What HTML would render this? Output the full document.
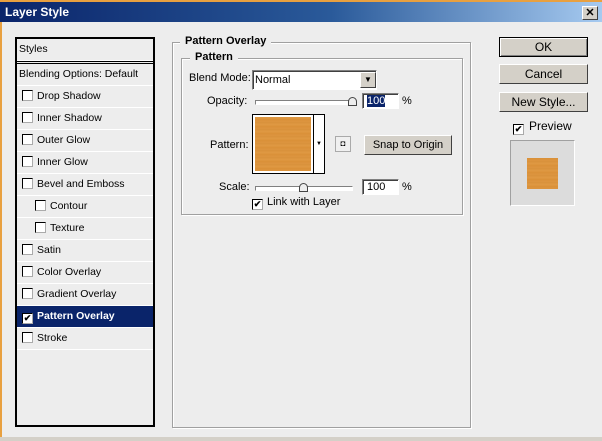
<!DOCTYPE html>
<html><head><style>
*{margin:0;padding:0;box-sizing:border-box}
body{width:602px;height:441px;background:#ededed;font-family:"Liberation Sans",sans-serif;font-size:11px;color:#000;position:relative;overflow:hidden}
.a{position:absolute}
.title{left:0;top:0;width:602px;height:22px;background:linear-gradient(90deg,#0a246a 0%,#2a5a9a 55%,#a6caf0 100%);border-top:2px solid #e8a040}
.title span{position:absolute;left:5px;top:3px;color:#fff;font-weight:bold;font-size:12px}
.x{right:4px;top:4px;width:16px;height:14px;background:#d4d0c8;border:1px solid;border-color:#fff #404040 #404040 #fff;font-size:11px;font-weight:bold;text-align:center;line-height:12px}
.lp{left:15px;top:37px;width:140px;height:390px;border:2px solid #000;background:#ededed;font-size:10.5px}
.row{position:absolute;left:0;width:136px;height:22px;border-bottom:1px solid #fff;line-height:21px;padding-left:2px}
.cb{display:inline-block;width:11px;height:11px;border:1px solid #000;border-right-color:#aaa;border-bottom-color:#aaa;background:#fff;vertical-align:-2px;margin-right:4px;margin-left:3px;font-size:9px;line-height:9px;text-align:center;font-weight:bold}
.sel{background:#0a246a;color:#fff;font-weight:bold}
.gb{border:1px solid #a0a0a0;box-shadow:1px 1px 0 #fff inset,1px 1px 0 #fff}
.lg{background:#ededed;font-weight:bold;padding:0 5px}
.btn{position:absolute;background:#d4d0c8;border:1px solid;border-color:#fff #404040 #404040 #fff;text-align:center;font-size:12px}
.in{background:#fff;border:1px solid;border-color:#808080 #fff #fff #808080;box-shadow:1px 1px 0 #404040 inset}
.sl{height:5px;border:1px solid;border-color:#808080 #fff #fff #808080;background:#fff}
.wood{background:repeating-linear-gradient(0deg,#dc9540 0,#d99038 3px,#e09a44 4px,#d8913a 7px)}
</style></head><body>
<div class="a" style="left:0;top:0;width:2px;height:441px;background:#e8a040"></div>
<div class="a title"><span>Layer Style</span><div class="a x">✕</div></div>

<div class="a lp">
<div class="row" style="top:0">Styles</div>
<div class="a" style="top:22px;left:0;width:136px;height:3px;border-top:1px solid #000;border-bottom:1px solid #000"></div>
<div class="row" style="top:25px">Blending Options: Default</div>
<div class="row" style="top:47px"><span class="cb"></span>Drop Shadow</div>
<div class="row" style="top:69px"><span class="cb"></span>Inner Shadow</div>
<div class="row" style="top:91px"><span class="cb"></span>Outer Glow</div>
<div class="row" style="top:113px"><span class="cb"></span>Inner Glow</div>
<div class="row" style="top:135px"><span class="cb"></span>Bevel and Emboss</div>
<div class="row" style="top:157px;padding-left:15px"><span class="cb"></span>Contour</div>
<div class="row" style="top:179px;padding-left:15px"><span class="cb"></span>Texture</div>
<div class="row" style="top:201px"><span class="cb"></span>Satin</div>
<div class="row" style="top:223px"><span class="cb"></span>Color Overlay</div>
<div class="row" style="top:245px"><span class="cb"></span>Gradient Overlay</div>
<div class="row sel" style="top:267px"><span class="cb" style="color:#000">✔</span>Pattern Overlay</div>
<div class="row" style="top:289px"><span class="cb"></span>Stroke</div>
</div>

<div class="a gb" style="left:172px;top:42px;width:299px;height:386px"></div>
<div class="a lg" style="left:180px;top:35px;font-size:11px">Pattern Overlay</div>
<div class="a gb" style="left:181px;top:58px;width:282px;height:157px"></div>
<div class="a lg" style="left:190px;top:51px">Pattern</div>

<div class="a" style="left:189px;top:72px">Blend Mode:</div>
<div class="a in" style="left:252px;top:70px;width:125px;height:20px;padding:3px 2px;font-size:11px">Normal</div>
<div class="a btn" style="left:360px;top:72px;width:16px;height:16px;font-size:8px;line-height:14px">▼</div>

<div class="a" style="left:207px;top:95px">Opacity:</div>
<div class="a sl" style="left:255px;top:100px;width:100px"></div>
<div class="a" style="left:348px;top:97px;width:9px;height:9px;background:#ededed;border:1px solid #444;border-radius:5px 5px 0 0"></div>
<div class="a in" style="left:362px;top:93px;width:37px;height:16px;padding:1px 4px"><span style="background:#0a246a;color:#fff">100</span></div>
<div class="a" style="left:402px;top:95px">%</div>

<div class="a" style="left:210px;top:139px">Pattern:</div>
<div class="a" style="left:252px;top:114px;width:73px;height:60px;border:1px solid #000;background:#fff"></div>
<div class="a wood" style="left:255px;top:117px;width:56px;height:54px"></div>
<div class="a" style="left:313px;top:114px;width:1px;height:60px;background:#000"></div>
<div class="a" style="left:316px;top:141px;font-size:6px">▼</div>
<div class="a" style="left:335px;top:136px;width:16px;height:16px;border:1px solid #aaa;background:#f0f0f0;font-size:8px;text-align:center;line-height:14px">◘</div>
<div class="a btn" style="left:364px;top:135px;width:88px;height:20px;font-size:11px;line-height:18px">Snap to Origin</div>

<div class="a" style="left:219px;top:181px">Scale:</div>
<div class="a sl" style="left:255px;top:186px;width:98px"></div>
<div class="a" style="left:299px;top:183px;width:9px;height:9px;background:#ededed;border:1px solid #444;border-radius:5px 5px 0 0"></div>
<div class="a in" style="left:362px;top:179px;width:37px;height:16px;padding:1px 4px">100</div>
<div class="a" style="left:402px;top:181px">%</div>

<div class="a" style="left:252px;top:196px"><span class="cb" style="margin-left:0;margin-right:4px">✔</span>Link with Layer</div>

<div class="a btn" style="left:499px;top:37px;width:89px;height:20px;line-height:18px;border:1px solid #000;box-shadow:inset 1px 1px 0 #fff,inset -1px -1px 0 #808080">OK</div>
<div class="a btn" style="left:499px;top:64px;width:89px;height:20px;line-height:18px">Cancel</div>
<div class="a btn" style="left:499px;top:92px;width:89px;height:20px;line-height:18px">New Style...</div>
<div class="a" style="left:513px;top:119px;font-size:12px"><span class="cb" style="margin-left:0;margin-right:5px">✔</span>Preview</div>
<div class="a" style="left:510px;top:140px;width:65px;height:66px;background:#dcdcdc;border:1px solid;border-color:#a0a0a0 #fff #fff #a0a0a0"></div>
<div class="a wood" style="left:527px;top:158px;width:31px;height:31px"></div>
<div class="a" style="left:0;top:437px;width:602px;height:4px;background:#d4d0c8"></div>
</body></html>
